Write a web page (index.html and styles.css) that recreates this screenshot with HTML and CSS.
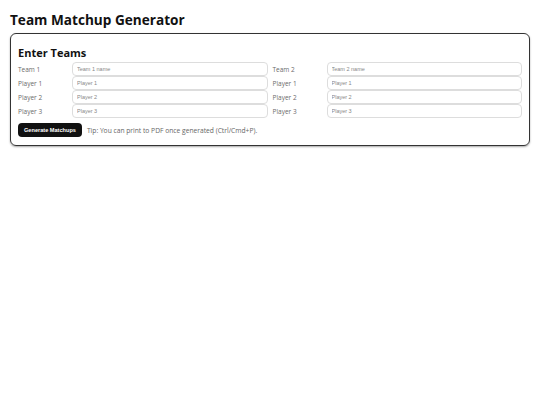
FILE: index.html
```html
<!DOCTYPE html>
<html>
<head>
<meta charset="utf-8">
<link rel="stylesheet" href="styles.css">
</head>
<body>
<h1 class="title">Team Matchup Generator</h1>
<section class="card">
  <h2 class="card-title">Enter Teams</h2>
  <div class="teams">
    <div class="team">
      <label class="lbl">Team 1</label><input class="inp" placeholder="Team 1 name">
      <label class="lbl">Player 1</label><input class="inp" placeholder="Player 1">
      <label class="lbl">Player 2</label><input class="inp" placeholder="Player 2">
      <label class="lbl">Player 3</label><input class="inp" placeholder="Player 3">
    </div>
    <div class="team">
      <label class="lbl">Team 2</label><input class="inp" placeholder="Team 2 name">
      <label class="lbl">Player 1</label><input class="inp" placeholder="Player 1">
      <label class="lbl">Player 2</label><input class="inp" placeholder="Player 2">
      <label class="lbl">Player 3</label><input class="inp" placeholder="Player 3">
    </div>
  </div>
  <div class="actions">
    <button class="btn">Generate Matchups</button>
    <span class="tip">Tip: You can print to PDF once generated (Ctrl/Cmd+P).</span>
  </div>
</section>
</body>
</html>
```
FILE: styles.css
```css
html, body { margin: 0; padding: 0; background: #fff; }
body { padding: 10px; font-family: "Open Sans", sans-serif; color: #111; }
.title { font-size: 13.6px; font-weight: 700; margin: 1px 0 4px 0; line-height: 18px; }
.card {
  border: 1px solid #333;
  border-radius: 6px;
  padding: 7px 7px 8px 7px;
  box-shadow: 0 1px 2px rgba(0,0,0,0.35);
}
.card-title { font-size: 11px; font-weight: 700; margin: 5px 0 2px 0; line-height: 14px; }
.teams { display: grid; grid-template-columns: 1fr 1fr; column-gap: 5px; }
.team { display: grid; grid-template-columns: 54px 1fr; grid-auto-rows: 14px; align-items: center; }
.lbl { font-size: 6.5px; color: #6b6b6b; }
.inp {
  box-sizing: border-box; height: 14px; width: 100%; margin: 0;
  border: 1px solid #ddd; border-radius: 4px;
  font-family: "Liberation Sans", Arial, sans-serif; font-size: 5.5px;
  padding: 0 4px; color: #333; background: #fff;
}
.inp::placeholder { color: #888; }
.actions { display: flex; align-items: center; gap: 5px; margin-top: 5px; }
.btn {
  background: #111; color: #fff; border: none; border-radius: 4px;
  font-family: "Liberation Sans", Arial, sans-serif; font-weight: 700; font-size: 5.6px;
  height: 14px; padding: 0 6px;
}
.tip { font-size: 6.7px; color: #666; }
```
